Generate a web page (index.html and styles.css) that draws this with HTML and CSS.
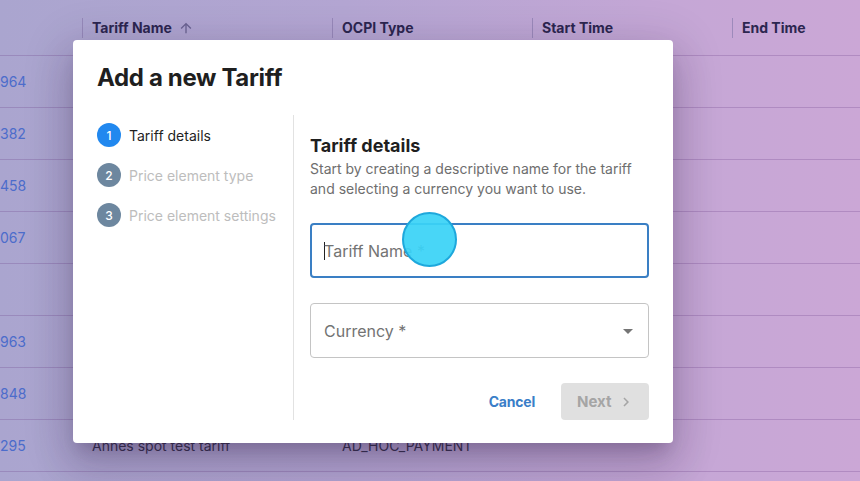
FILE: index.html
```html
<!DOCTYPE html>
<html lang="en">
<head>
<meta charset="utf-8">
<title>Add a new Tariff</title>
<link rel="stylesheet" href="styles.css">
</head>
<body>
<div class="page">
  <div class="table">
    <div class="row head">
      <div class="cell c0"></div>
      <div class="cell c1"><span class="sep"></span>Tariff Name
        <svg class="sort" viewBox="0 0 24 24" width="16" height="16"><path d="M4 12l1.41 1.41L11 7.83V20h2V7.83l5.58 5.59L20 12l-8-8-8 8z"/></svg>
      </div>
      <div class="cell c2"><span class="sep"></span>OCPI Type</div>
      <div class="cell c3"><span class="sep"></span>Start Time</div>
      <div class="cell c4"><span class="sep"></span>End Time</div>
    </div>
    <div class="row"><div class="cell c0 id">964</div></div>
    <div class="row"><div class="cell c0 id">382</div></div>
    <div class="row"><div class="cell c0 id">458</div></div>
    <div class="row"><div class="cell c0 id">067</div></div>
    <div class="row"><div class="cell c0 id"></div></div>
    <div class="row"><div class="cell c0 id">963</div></div>
    <div class="row"><div class="cell c0 id">848</div></div>
    <div class="row">
      <div class="cell c0 id">295</div>
      <div class="cell c1 txt">Annes spot test tariff</div>
      <div class="cell c2 txt">AD_HOC_PAYMENT</div>
    </div>
    <div class="row"></div>
  </div>

  <div class="dialog">
    <h2 class="title">Add a new Tariff</h2>
    <div class="body">
      <div class="stepper">
        <div class="step active"><span class="num">1</span><span class="label">Tariff details</span></div>
        <div class="step"><span class="num">2</span><span class="label">Price element type</span></div>
        <div class="step"><span class="num">3</span><span class="label">Price element settings</span></div>
      </div>
      <div class="content">
        <h3 class="heading">Tariff details</h3>
        <p class="desc">Start by creating a descriptive name for the tariff and selecting a currency you want to use.</p>
        <div class="field focused"><span class="caret"></span><span class="ph">Tariff Name *</span></div>
        <div class="field select"><span class="ph">Currency *</span>
          <svg class="drop" viewBox="0 0 24 24" width="24" height="24"><path d="M7 10l5 5 5-5z"/></svg>
        </div>
        <div class="actions">
          <button class="btn cancel" type="button">Cancel</button>
          <button class="btn next" type="button">Next
            <svg viewBox="0 0 24 24" width="18" height="18"><path d="M10 6 8.59 7.41 13.17 12l-4.58 4.59L10 18l6-6z"/></svg>
          </button>
        </div>
      </div>
    </div>
  </div>
  <div class="click"></div>
</div>
</body>
</html>
```

FILE: styles.css
```css
* { box-sizing: border-box; }
html, body { margin: 0; padding: 0; }
body {
  width: 860px;
  height: 481px;
  overflow: hidden;
  font-family: "Inter", "Roboto", "Liberation Sans", sans-serif;
}
.page {
  position: relative;
  width: 860px;
  height: 481px;
  overflow: hidden;
  background: linear-gradient(90deg, #aaa5cf 0%, #b4a6d3 40%, #c4a7d6 75%, #cba7d6 100%);
}
.table { display: flex; flex-direction: column; }
.row {
  display: flex;
  height: 52px;
  border-bottom: 1px solid rgba(110, 70, 140, 0.28);
}
.row.head { height: 56px; }
.cell {
  display: flex;
  align-items: center;
  font-size: 14px;
}
.c0 { width: 82px; }
.c1 { width: 250px; }
.c2 { width: 200px; }
.c3 { width: 200px; }
.c4 { flex: 1; }
.head .cell {
  font-weight: 700;
  color: #2c2650;
}
.sep {
  display: inline-block;
  width: 1px;
  height: 20px;
  background: rgba(140, 125, 175, 0.7);
  margin-right: 9px;
}
.sort { margin-left: 6px; fill: #6a6392; }
.id { color: #4c6ccb; font-size: 14px; }
.txt { color: #3a3452; padding-left: 10px; }

.dialog {
  position: absolute;
  left: 73px;
  top: 40px;
  width: 600px;
  height: 403px;
  background: #fff;
  border-radius: 4px;
  box-shadow: 0 11px 15px -7px rgba(40, 20, 60, 0.22), 0 24px 38px 3px rgba(40, 20, 60, 0.16), 0 9px 46px 8px rgba(40, 20, 60, 0.14);
  display: flex;
  flex-direction: column;
  padding: 0 24px 23px 24px;
}
.title {
  margin: 0;
  padding-top: 22px;
  height: 75px;
  font-size: 24px;
  line-height: 32px;
  font-weight: 700;
  color: #1f1f1f;
  letter-spacing: -0.35px;
}
.body {
  flex: 1;
  display: flex;
}
.stepper {
  width: 197px;
  border-right: 1px solid #e2e2e2;
  display: flex;
  flex-direction: column;
}
.step {
  height: 40px;
  display: flex;
  align-items: center;
  gap: 8px;
}
.num {
  width: 24px;
  height: 24px;
  border-radius: 50%;
  background: #6d879f;
  color: #fff;
  font-size: 12px;
  font-weight: 500;
  display: flex;
  align-items: center;
  justify-content: center;
}
.step.active .num { background: #2188ef; }
.label { font-size: 14px; color: #bdbdbd; }
.step.active .label { color: #1f1f1f; }

.content {
  flex: 1;
  padding: 19px 0 0 16px;
  display: flex;
  flex-direction: column;
}
.heading {
  margin: 0;
  font-size: 18px;
  line-height: 24px;
  font-weight: 700;
  color: #1f1f1f;
}
.desc {
  margin: 1px 0 0;
  font-size: 14px;
  line-height: 20px;
  color: #6e6e6e;
}
.field {
  height: 55px;
  border: 1px solid #c4c4c4;
  border-radius: 4px;
  display: flex;
  align-items: center;
  padding-left: 13px;
  position: relative;
}
.field.focused {
  margin-top: 24px;
  border: 2px solid #3a7fc4;
  padding-left: 12px;
}
.field.select { margin-top: 25px; }
.ph { font-size: 16px; color: #737373; }
.caret {
  width: 1px;
  height: 18px;
  background: #222;
  margin-right: -1px;
}
.drop { fill: #757575; margin-left: auto; margin-right: 8px; }
.actions {
  margin-top: 25px;
  display: flex;
  justify-content: flex-end;
  align-items: center;
  gap: 14px;
}
.btn {
  font-family: inherit;
  border: none;
  border-radius: 4px;
  font-size: 15px;
  font-weight: 700;
  height: 37px;
  display: flex;
  align-items: center;
  cursor: pointer;
}
.cancel {
  background: transparent;
  color: #3a7ec8;
  font-size: 14px;
  letter-spacing: -0.2px;
  padding: 0 12px;
}
.next {
  width: 88px;
  background: #e0e0e0;
  color: #a5a5a5;
  padding: 0 0 0 16px;
  gap: 6px;
}
.next svg { fill: #a5a5a5; }

.click {
  position: absolute;
  left: 402px;
  top: 212px;
  width: 55px;
  height: 55px;
  border-radius: 50%;
  background: rgba(58, 211, 246, 0.93);
  border: 2px solid #1ea8dc;
}
```
